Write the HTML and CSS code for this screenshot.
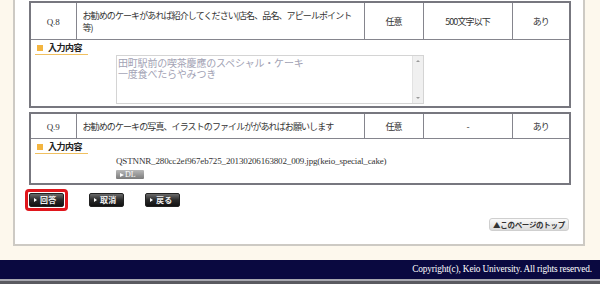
FILE: index.html
```html
<!DOCTYPE html>
<html lang="ja">
<head>
<meta charset="utf-8">
<title>アンケート</title>
<link rel="stylesheet" href="styles.css">
</head>
<body>
<div class="panel">
  <table class="qtable">
    <colgroup>
      <col class="c-no"><col class="c-q"><col class="c-req"><col class="c-len"><col class="c-ok">
    </colgroup>
    <tr class="head">
      <td class="no">Q.8</td>
      <td class="qtext">お勧めのケーキがあれば紹介してください(店名、品名、アピールポイント等)</td>
      <td class="mid">任意</td>
      <td class="mid">500文字以下</td>
      <td class="mid">あり</td>
    </tr>
    <tr>
      <td colspan="5" class="answer">
        <div class="ans-label"><span class="sq"></span>入力内容</div>
        <div class="ans-body">
          <div class="tarea">
            <div class="tarea-text">田町駅前の喫茶慶應のスペシャル・ケーキ<br>一度食べたらやみつき</div>
            <div class="sbar"><span class="arr up"></span><span class="arr down"></span></div>
          </div>
        </div>
      </td>
    </tr>
  </table>

  <table class="qtable">
    <colgroup>
      <col class="c-no"><col class="c-q"><col class="c-req"><col class="c-len"><col class="c-ok">
    </colgroup>
    <tr class="head">
      <td class="no">Q.9</td>
      <td class="qtext">お勧めのケーキの写真、イラストのファイルががあればお願いします</td>
      <td class="mid">任意</td>
      <td class="mid">-</td>
      <td class="mid">あり</td>
    </tr>
    <tr>
      <td colspan="5" class="answer">
        <div class="ans-label"><span class="sq"></span>入力内容</div>
        <div class="ans-body file">
          <div class="fname">QSTNNR_280cc2ef967eb725_20130206163802_009.jpg(keio_special_cake)</div>
          <div class="dl"><span class="tri"></span>DL</div>
        </div>
      </td>
    </tr>
  </table>

  <div class="actions">
    <span class="focus"><span class="btn"><span class="tri"></span>回答</span></span>
    <span class="btn"><span class="tri"></span>取消</span>
    <span class="btn"><span class="tri"></span>戻る</span>
  </div>

  <div class="totop-row"><span class="totop">▲このページのトップ</span></div>
</div>

<div class="footer">Copyright(c), Keio University. All rights reserved.</div>
<div class="bottombar"></div>
</body>
</html>
```

FILE: styles.css
```css
html, body {
  margin: 0;
  padding: 0;
}
body {
  background: #fdf8ed;
  font-family: "Noto Sans CJK JP", "Noto Sans", sans-serif;
  color: #333;
  width: 600px;
  height: 284px;
  overflow: hidden;
}
.panel {
  margin: 0 15px 0 13px;
  background: #fff;
  border: 2px solid #cdcac4;
  border-top: 0;
  padding: 1px 14px 13px 14px;
}
.qtable {
  width: 540px;
  border-collapse: collapse;
  table-layout: fixed;
  border: 2px solid #77777f;
  margin-bottom: 4px;
}
.qtable td {
  border: 1px solid #85858d;
  padding: 0;
}
.c-no { width: 46px; }
.c-q { width: 288px; }
.c-req { width: 59px; }
.c-len { width: 89px; }
.c-ok { width: 58px; }

.head td {
  font-size: 9px;
  line-height: 12px;
  letter-spacing: -0.9px;
  padding: 7px 0 5px 0;
  color: #333;
  vertical-align: middle;
}
.head .no {
  text-align: center;
  font-family: "Liberation Serif", serif;
  font-size: 9px;
  letter-spacing: 0;
  color: #333;
}
.head .qtext {
  padding-left: 6px;
  padding-right: 10px;
}
.head .mid {
  text-align: center;
}
.qtable td.answer {
  padding: 3px 4px 2px 4px;
}
.ans-label {
  width: 53px;
  height: 12px;
  display: flex;
  align-items: center;
  gap: 5px;
  font-size: 9px;
  line-height: 10px;
  font-weight: bold;
  letter-spacing: -0.5px;
  color: #222;
  padding: 0 0 1px 2px;
  border-bottom: 1px solid #f0c060;
  box-sizing: border-box;
}
.sq {
  width: 6px;
  height: 6px;
  background: #f3b540;
  flex: none;
}
.ans-body {
  margin-left: 81px;
}
.tarea {
  width: 308px;
  height: 49px;
  box-sizing: border-box;
  border: 1px solid #d4d4d4;
  display: flex;
  background: #fff;
}
.tarea-text {
  flex: 1;
  font-size: 10px;
  line-height: 11px;
  color: #a2a2b4;
  padding: 1px 1px;
  letter-spacing: -0.2px;
}
.sbar {
  width: 10px;
  background: #f0f0f0;
  border-left: 1px solid #e2e2e2;
  display: flex;
  flex-direction: column;
  justify-content: space-between;
  align-items: center;
  padding: 4px 0;
}
.arr {
  width: 0;
  height: 0;
  border-left: 2px solid transparent;
  border-right: 2px solid transparent;
}
.arr.up { border-bottom: 2px solid #999; }
.arr.down { border-top: 2px solid #999; }

.ans-body.file {
  padding: 2px 0 2px 0;
}
.fname {
  font-family: "Liberation Serif", serif;
  font-size: 9px;
  line-height: 11px;
  height: 11px;
  color: #333;
  letter-spacing: -0.15px;
}
.dl {
  display: flex;
  align-items: center;
  gap: 1px;
  width: 28px;
  height: 9px;
  box-sizing: border-box;
  padding-left: 4px;
  margin-top: 3px;
  background: linear-gradient(#b8b8b8, #7c7c7c);
  border-radius: 1px;
  color: #fff;
  font-family: "Liberation Serif", serif;
  font-size: 8px;
  line-height: 9px;
}
.dl .tri {
  border-left: 4px solid #fff;
  border-top: 2.5px solid transparent;
  border-bottom: 2.5px solid transparent;
}

.actions {
  display: flex;
  align-items: center;
  gap: 21px;
  margin-top: 2px;
}
.focus {
  display: inline-flex;
  border: 3px solid #e0161c;
  border-radius: 4px;
  padding: 1px;
  margin-left: -4px;
}
.btn {
  display: inline-flex;
  align-items: center;
  gap: 3px;
  width: 35px;
  height: 14px;
  box-sizing: border-box;
  padding-left: 4px;
  background: linear-gradient(#6a6a6a, #2a2a2a 50%, #111);
  border: 1px solid #222;
  border-radius: 2px;
  color: #f0f0f0;
  font-size: 8px;
  line-height: 10px;
  font-weight: bold;
  letter-spacing: 0.3px;
}
.btn .tri {
  border-left: 3px solid #fff;
  border-top: 2.5px solid transparent;
  border-bottom: 2.5px solid transparent;
}
.totop-row {
  display: flex;
  justify-content: flex-end;
  margin-top: 7px;
}
.totop {
  width: 80px;
  height: 13px;
  box-sizing: border-box;
  border: 1px solid #cfcfcf;
  border-radius: 3px;
  background: linear-gradient(#fafafa, #dcdcdc);
  font-size: 7.5px;
  line-height: 11px;
  font-weight: bold;
  color: #333;
  text-align: center;
  letter-spacing: -0.3px;
}
.footer {
  margin-top: 14px;
  height: 19px;
  background: #0a0940;
  color: #fff;
  font-family: "Liberation Serif", serif;
  font-size: 9.3px;
  line-height: 19px;
  text-align: right;
  padding-right: 8px;
  letter-spacing: -0.15px;
}
.bottombar {
  height: 6px;
  border-top: 2px solid #a8a8b0;
  background: #5a5a60;
  box-sizing: border-box;
}
```
